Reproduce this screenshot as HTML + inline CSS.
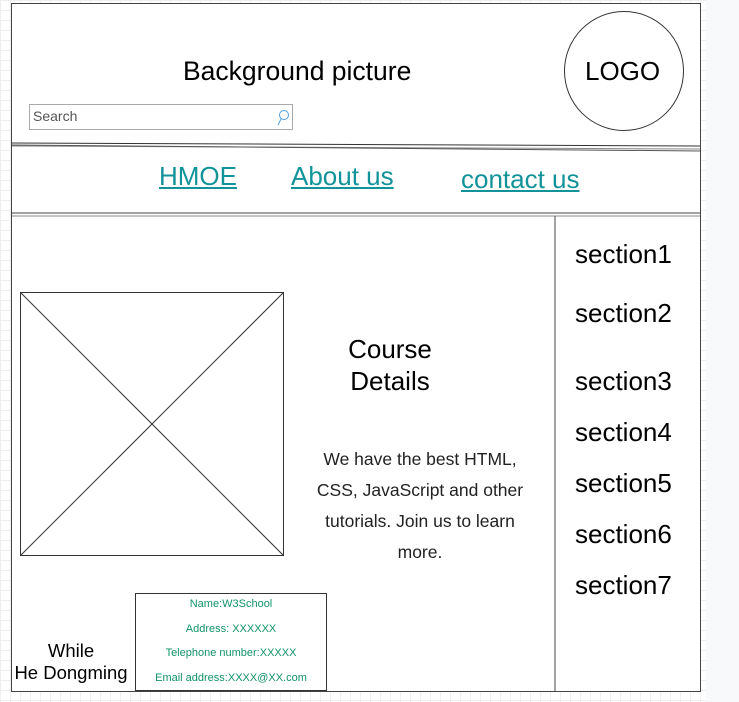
<!DOCTYPE html>
<html><head><meta charset="utf-8"><style>
body{margin:0;width:739px;height:702px;position:relative;overflow:hidden;font-family:"Liberation Sans",sans-serif;
background-color:#fff;background-image:linear-gradient(#eee 1px,transparent 1px),linear-gradient(90deg,#eee 1px,transparent 1px);background-size:10px 10px}
.a{position:absolute}
.t{position:absolute;white-space:nowrap}
a{color:#12939a;text-decoration:underline}
</style></head><body>
<div class="a" style="left:706px;top:0;width:33px;height:702px;background:#f8f9fa"></div>
<div class="a" style="left:11px;top:3px;width:688px;height:687px;border:1px solid #444;background:#fff"></div>
<svg class="a" style="left:0;top:0" width="739" height="702">
<line x1="12" y1="143" x2="700" y2="146" stroke="#333" stroke-width="1"/>
<line x1="12" y1="146" x2="700" y2="149" stroke="#888" stroke-width="1"/>
<line x1="12" y1="145" x2="700" y2="151" stroke="#555" stroke-width="1"/>
<line x1="12" y1="213" x2="700" y2="213" stroke="#444"/>
<line x1="12" y1="216" x2="700" y2="216" stroke="#888"/>
<line x1="555" y1="216" x2="555" y2="691" stroke="#444"/>
<ellipse cx="624" cy="71" rx="59.5" ry="59.5" fill="none" stroke="#333"/>
<rect x="20.5" y="292.5" width="263" height="263" fill="none" stroke="#333"/>
<line x1="21" y1="293" x2="283" y2="555" stroke="#333"/>
<line x1="283" y1="293" x2="21" y2="555" stroke="#333"/>
<rect x="29.5" y="104.5" width="263" height="25" fill="#fff" stroke="#aaa"/>
<circle cx="284" cy="115" r="4.5" fill="none" stroke="#4a9de0"/>
<line x1="281" y1="119" x2="278" y2="125" stroke="#4a9de0"/>
<rect x="135.5" y="593.5" width="191" height="97" fill="#fff" stroke="#333"/>
</svg>
<div class="t" style="left:183px;top:56px;font-size:26.5px">Background picture</div>
<div class="t" style="left:585px;top:56px;font-size:26px">LOGO</div>
<div class="t" style="left:33px;top:108px;font-size:14px;color:#555">Search</div>
<div class="t" style="left:159px;top:161px;font-size:26px"><a>HMOE</a></div>
<div class="t" style="left:291px;top:161px;font-size:26px"><a>About us</a></div>
<div class="t" style="left:461px;top:164px;font-size:26px"><a>contact us</a></div>
<div class="t" style="left:320px;top:333px;width:140px;text-align:center;font-size:26px;line-height:32px;white-space:normal">Course<br>Details</div>
<div class="t" style="left:305px;top:444px;width:230px;text-align:center;font-size:17.5px;line-height:31px;white-space:normal;color:#222">We have the best HTML,<br>CSS, JavaScript and other<br>tutorials. Join us to learn<br>more.</div>
<div class="t" style="left:575px;top:239px;font-size:26px">section1</div>
<div class="t" style="left:575px;top:298px;font-size:26px">section2</div>
<div class="t" style="left:575px;top:366px;font-size:26px">section3</div>
<div class="t" style="left:575px;top:417px;font-size:26px">section4</div>
<div class="t" style="left:575px;top:468px;font-size:26px">section5</div>
<div class="t" style="left:575px;top:519px;font-size:26px">section6</div>
<div class="t" style="left:575px;top:570px;font-size:26px">section7</div>
<div class="t" style="left:10px;top:640px;width:122px;text-align:center;font-size:18.5px;line-height:22px;white-space:normal">While<br>He Dongming</div>
<div class="t" style="left:136px;top:592px;width:190px;text-align:center;font-size:11px;line-height:24.5px;color:#12936a;white-space:normal">Name:W3School<br>Address: XXXXXX<br>Telephone number:XXXXX<br>Email address:XXXX@XX.com</div>
</body></html>
